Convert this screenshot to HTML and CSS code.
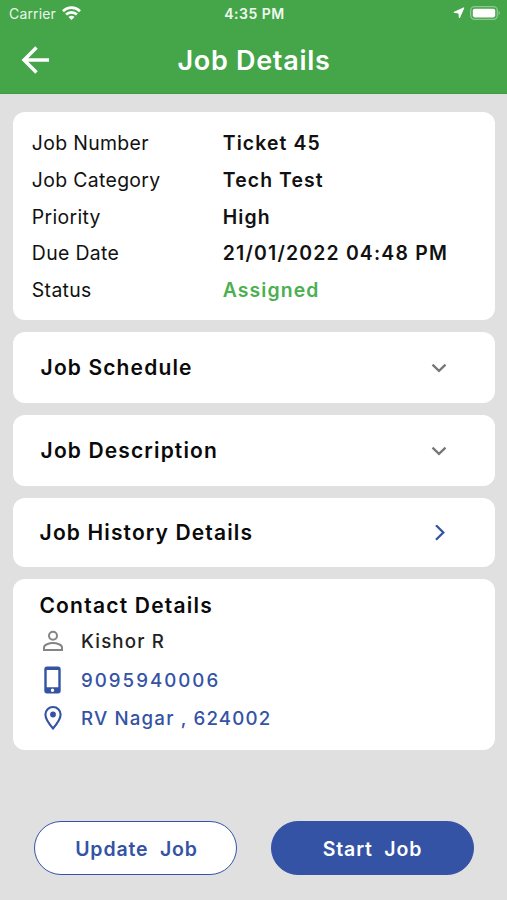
FILE: index.html
```html
<!DOCTYPE html>
<html lang="en">
<head>
<meta charset="utf-8">
<title>Job Details</title>
<link rel="stylesheet" href="styles.css">
</head>
<body>
<div class="screen">
  <header class="header">
    <div class="status-bar">
      <div class="carrier">
        <span>Carrier</span>
        <svg width="19" height="14" viewBox="0 0 19 14" fill="none" stroke="#fff" stroke-width="2.700">
          <path d="M1 5.200a12.100 12.100 0 0 1 17 0M4.100 8.500a7.700 7.700 0 0 1 10.800 0"/>
          <path d="M9.500 13.900 6.500 10.900a4.250 4.250 0 0 1 6 0z" fill="#fff" stroke="none"/>
        </svg>
      </div>
      <span class="clock">4:35 PM</span>
      <div class="indicators">
        <svg width="12" height="12" viewBox="0 0 12 12"><path d="M10.900.8.900 5.400l5 .6.500 5z" fill="#fff" stroke="#fff" stroke-width="1" stroke-linejoin="round"/></svg>
        <svg width="31" height="14" viewBox="0 0 31 14">
          <rect x=".7" y=".7" width="26.600" height="12.600" rx="3.800" fill="none" stroke="#fff" stroke-opacity=".4" stroke-width="1.300"/>
          <rect x="2.800" y="2.800" width="22.400" height="8.600" rx="1.800" fill="#fff"/>
          <path d="M28.700 4.800q2 2.200 0 4.400z" fill="#fff" fill-opacity=".5"/>
        </svg>
      </div>
    </div>
    <div class="title-bar">
      <svg class="back" width="30" height="28" viewBox="0 0 30 28" fill="none" stroke="#fff" stroke-width="3.400"><path d="M28 14H3M15.500 1.500 3 14l12.500 12.500"/></svg>
      <h1>Job Details</h1>
    </div>
  </header>

  <main class="content">
    <dl class="card summary">
      <dt>Job Number</dt><dd>Ticket 45</dd>
      <dt>Job Category</dt><dd>Tech Test</dd>
      <dt>Priority</dt><dd>High</dd>
      <dt>Due Date</dt><dd class="date">21/01/2022 04:48 PM</dd>
      <dt>Status</dt><dd class="assigned">Assigned</dd>
    </dl>

    <section class="card row">
      <h2>Job Schedule</h2>
      <svg class="chevron" width="16" height="16" viewBox="0 0 16 16"><path d="M1.500 4.700 8 10.800l6.500-6.100"/></svg>
    </section>
    <section class="card row">
      <h2>Job Description</h2>
      <svg class="chevron" width="16" height="16" viewBox="0 0 16 16"><path d="M1.500 4.700 8 10.800l6.500-6.100"/></svg>
    </section>
    <section class="card row history">
      <h2>Job History Details</h2>
      <svg class="chevron" width="16" height="16" viewBox="0 0 16 16"><path d="M5 .3 12.300 7.500 5 14.700"/></svg>
    </section>

    <section class="card contact">
      <h2>Contact Details</h2>
      <div class="line name">
        <svg width="20" height="28" viewBox="0 0 20 28" fill="none" stroke="#858585" stroke-width="2"><circle cx="10" cy="8.800" r="4"/><path d="M1 22.900v-2.400c0-2.800 5.200-4.400 9-4.400s9 1.600 9 4.400v2.400z"/></svg>
        <span>Kishor R</span>
      </div>
      <div class="line phone">
        <svg width="20" height="28" viewBox="0 0 20 28"><path fill="#3453a4" fill-rule="evenodd" d="M4 .500h11a2.700 2.700 0 0 1 2.700 2.700v21.600a2.700 2.700 0 0 1-2.700 2.700H4a2.700 2.700 0 0 1-2.700-2.700V3.200A2.700 2.700 0 0 1 4 .500zM3.700 3.900v17.300h11.600V3.900zM9.500 22.600a1.700 1.700 0 1 0 0 3.400 1.700 1.700 0 0 0 0-3.400z"/></svg>
        <span>9095940006</span>
      </div>
      <div class="line address">
        <svg width="20" height="28" viewBox="0 0 20 28"><path d="M10 3c-4.300 0-7.600 3.300-7.600 7.600 0 5.200 7.600 13.900 7.600 13.900s7.600-8.700 7.600-13.900c0-4.300-3.300-7.600-7.600-7.600z" fill="none" stroke="#3453a4" stroke-width="2.100"/><circle cx="10" cy="10.500" r="2.900" fill="#3453a4"/></svg>
        <span>RV Nagar , 624002</span>
      </div>
    </section>
  </main>

  <footer class="actions">
    <button class="btn outline">Update  Job</button>
    <button class="btn solid">Start  Job</button>
  </footer>
</div>
</body>
</html>
```
FILE: styles.css
```css
* { box-sizing: border-box; margin: 0; }
body { background: #e0e0e0; font-family: Inter, "Liberation Sans", sans-serif; color: #111; }
svg { display: block; flex: none; }
.screen { height: 900px; display: flex; flex-direction: column; }

.header { height: 94px; background: #45a549; color: #fff; border-bottom: 1px solid #3f9b46; }
.status-bar { height: 28px; padding: 0 7px 0 9px; display: grid; grid-template-columns: 1fr auto 1fr; align-items: center; font-size: 14px; }
.carrier { display: flex; align-items: center; gap: 6px; letter-spacing: .15px; color: #e9f6ea; margin-top: -1px; }
.carrier svg { margin-top: -1px; }
.clock { font-weight: 600; letter-spacing: .5px; color: #f0faf0; margin-top: -1px; }
.indicators { display: flex; justify-content: flex-end; align-items: center; gap: 5px; margin-right: -1px; }
.indicators svg { margin-top: -2px; }
.title-bar { height: 65px; display: grid; grid-template-columns: 60px 1fr 60px; align-items: center; }
.back { margin-left: 20.500px; margin-top: -1px; }
h1 { font-size: 27px; font-weight: 600; letter-spacing: .7px; text-align: center; padding-left: 1px; }

.content { padding: 18px 12px 0 13px; display: flex; flex-direction: column; gap: 12px; }
.card { background: #fff; border-radius: 12px; }
.summary { height: 208px; padding: 12.900px 18.800px; display: grid; grid-template-columns: 191px 1fr; grid-auto-rows: 36.700px; align-items: center; font-size: 19.400px; letter-spacing: .350px; }
.summary dd { font-weight: 600; letter-spacing: 1.100px; }
.summary .date { letter-spacing: 1.200px; }
.summary .assigned { color: #4caf50; }
h2 { font-size: 21px; font-weight: 600; letter-spacing: 1.130px; line-height: 26px; color: #0a0a0a; }
.row { height: 71px; padding: 0 48.500px 0 27.600px; display: flex; align-items: center; justify-content: space-between; }
.row h2 { padding-top: 1px; }
.history { height: 69px; padding-left: 26.600px; }
.chevron { fill: none; stroke: #777; stroke-width: 2.300; }
.history .chevron { stroke: #3453a4; }

.contact { height: 171px; padding: 14px 26px; }
.contact h2 { letter-spacing: 1.220px; padding-left: .400px; }
.line { display: flex; align-items: center; gap: 18px; height: 38px; padding-left: 4px; font-size: 18.700px; font-weight: 500; letter-spacing: 1.170px; color: #3453a4; }
.name { color: #222; margin-top: 3px; margin-bottom: 1px; }
.phone { letter-spacing: 2px; }

.actions { margin: auto 33px 25px 34px; display: flex; justify-content: space-between; }
.btn { width: 203px; height: 54px; border-radius: 27px; border: 1.500px solid #3453a4; font: 600 19.500px Inter, "Liberation Sans", sans-serif; letter-spacing: .850px; white-space: pre; padding-top: 2px; }
.outline { background: #fff; color: #3453a4; padding-left: 8px; }
.solid { background: #3453a4; color: #fff; }
```
